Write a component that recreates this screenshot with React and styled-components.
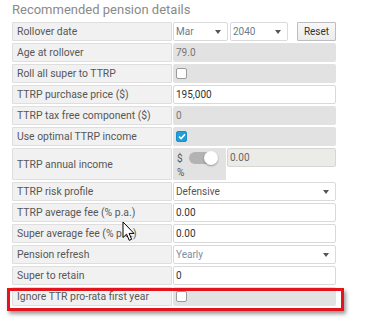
import React from "react";
import styled, { createGlobalStyle } from "styled-components";

const Global = createGlobalStyle`
  html, body { margin: 0; padding: 0; background: #fff; }
  body { font-family: Roboto, "Liberation Sans", Arial, sans-serif; }
`;

const Panel = styled.div`
  position: relative;
  width: 368px;
  height: 324px;
  box-sizing: border-box;
  padding: 2px 0 0 12px;
  overflow: hidden;
`;

const Title = styled.h2`
  margin: 0 0 4px;
  height: 16px;
  line-height: 16px;
  font-size: 13px;
  font-weight: 400;
  color: #8a8a8a;
`;

const Form = styled.div`
  display: flex;
  flex-direction: column;
  gap: 2px;
  width: 324px;
`;

const Row = styled.div`
  display: grid;
  grid-template-columns: 160px 1fr;
  column-gap: 1px;
  height: ${(p) => (p.$tall ? 32 : 19)}px;
`;

const Label = styled.div`
  display: flex;
  align-items: center;
  box-sizing: border-box;
  padding-left: 4px;
  background: #f1f1f1;
  border: 1px solid #dedede;
  border-radius: 1px;
  font-size: 10.4px;
  color: #575757;
  white-space: nowrap;
`;

const ReadOnly = styled.div`
  display: flex;
  align-items: center;
  box-sizing: border-box;
  padding-left: 3px;
  background: #e2e2e2;
  border-radius: 2px;
  font-size: 10px;
  color: #777;
`;

const TextInput = styled.input`
  box-sizing: border-box;
  width: 100%;
  height: 19px;
  margin: 0;
  padding: 0 2px;
  background: ${(p) => (p.disabled ? "#ebebe7" : "#fff")};
  border: 1px solid ${(p) => (p.disabled ? "#d6d6d2" : "#d9d9d9")};
  border-radius: 2px;
  font-family: inherit;
  font-size: 10px;
  color: ${(p) => (p.disabled ? "#666" : "#333")};
  outline: none;
`;

const SelectBox = styled.div`
  display: flex;
  align-items: center;
  justify-content: space-between;
  box-sizing: border-box;
  width: ${(p) => (p.$w ? `${p.$w}px` : "100%")};
  height: 19px;
  padding: 0 6px 0 2px;
  background: #fff;
  border: 1px solid #dadada;
  border-radius: 2px;
  font-size: 10px;
  color: ${(p) => p.$color || "#666"};
`;

const Caret = () => (
  <svg width="6" height="4" viewBox="0 0 6 4">
    <path d="M0 0H6L3 4Z" fill="#555" />
  </svg>
);

const Select = ({ value, w, color }) => (
  <SelectBox $w={w} $color={color}>
    <span>{value}</span>
    <Caret />
  </SelectBox>
);

const DateControls = styled.div`
  display: flex;
  align-items: center;
`;

const Gap = styled.span`
  width: ${(p) => p.$w}px;
`;

const Button = styled.button`
  box-sizing: border-box;
  width: 39px;
  height: 19px;
  margin: 0;
  padding: 0;
  background: linear-gradient(#f7f7f7, #ececec);
  border: 1px solid #bdbdbd;
  border-radius: 1px;
  font-family: inherit;
  font-size: 10px;
  color: #333;
`;

const CheckCell = styled(ReadOnly)`
  padding-left: 3px;
`;

const Check = styled.span`
  display: flex;
  align-items: center;
  justify-content: center;
  box-sizing: border-box;
  width: 11px;
  height: 11px;
  background: ${(p) => (p.$on ? "#1f9fd9" : "#fff")};
  border: 1px solid ${(p) => (p.$on ? "#1a8fc4" : "#9a9a9a")};
  border-radius: 2px;
`;

const Checkbox = ({ on }) => (
  <Check $on={on}>
    {on && (
      <svg width="8" height="7" viewBox="0 0 8 7">
        <path d="M1 3.6L3.1 5.6L7 1.2" fill="none" stroke="#fff" strokeWidth="1.6" />
      </svg>
    )}
  </Check>
);

const IncomeCell = styled.div`
  display: grid;
  grid-template-columns: 53px 1fr;
  column-gap: 1px;
  align-items: start;
`;

const ModeBox = styled.div`
  display: flex;
  flex-direction: column;
  box-sizing: border-box;
  height: 32px;
  padding: 3px 0 0 4px;
  background: #e2e2e2;
  font-size: 10px;
  color: #555;
`;

const ModeLine = styled.div`
  display: flex;
  align-items: center;
  gap: 6px;
  height: 14px;
`;

const Track = styled.span`
  display: flex;
  align-items: center;
  justify-content: flex-end;
  width: 28px;
  height: 12px;
  border-radius: 6px;
  background: #b3b3b3;
`;

const Knob = styled.span`
  width: 14px;
  height: 14px;
  margin-right: -1px;
  border-radius: 50%;
  background: #fff;
  box-shadow: 0 1px 2px rgba(0, 0, 0, 0.35);
`;

const Highlight = styled.div`
  position: relative;
`;

const Annotation = styled.div`
  position: absolute;
  left: -5px;
  top: 1px;
  right: -8px;
  bottom: -5px;
  border: 3px solid #e3141c;
  box-shadow: 2px 3px 4px rgba(0, 0, 0, 0.4);
  pointer-events: none;
`;

const Cursor = styled.svg`
  position: absolute;
  left: 122px;
  top: 221px;
`;

export default function App() {
  return (
    <>
      <Global />
      <Panel>
        <Title>Recommended pension details</Title>
        <Form>
          <Row>
            <Label>Rollover date</Label>
            <DateControls>
              <Select value="Mar" w={55} color="#6b7c8f" />
              <Gap $w={2} />
              <Select value="2040" w={58} color="#6b7c8f" />
              <Gap $w={9} />
              <Button>Reset</Button>
            </DateControls>
          </Row>
          <Row>
            <Label>Age at rollover</Label>
            <ReadOnly>79.0</ReadOnly>
          </Row>
          <Row>
            <Label>Roll all super to TTRP</Label>
            <CheckCell>
              <Checkbox />
            </CheckCell>
          </Row>
          <Row>
            <Label>TTRP purchase price ($)</Label>
            <TextInput readOnly value="195,000" />
          </Row>
          <Row>
            <Label>TTRP tax free component ($)</Label>
            <ReadOnly>0</ReadOnly>
          </Row>
          <Row>
            <Label>Use optimal TTRP income</Label>
            <CheckCell>
              <Checkbox on />
            </CheckCell>
          </Row>
          <Row $tall>
            <Label>TTRP annual income</Label>
            <IncomeCell>
              <ModeBox>
                <ModeLine>
                  <span>$</span>
                  <Track>
                    <Knob />
                  </Track>
                </ModeLine>
                <ModeLine>%</ModeLine>
              </ModeBox>
              <TextInput disabled value="0.00" readOnly />
            </IncomeCell>
          </Row>
          <Row>
            <Label>TTRP risk profile</Label>
            <Select value="Defensive" color="#555" />
          </Row>
          <Row>
            <Label>TTRP average fee (% p.a.)</Label>
            <TextInput readOnly value="0.00" />
          </Row>
          <Row>
            <Label>Super average fee (% p.a.)</Label>
            <TextInput readOnly value="0.00" />
          </Row>
          <Row>
            <Label>Pension refresh</Label>
            <Select value="Yearly" color="#7d8ea3" />
          </Row>
          <Row>
            <Label>Super to retain</Label>
            <TextInput readOnly value="0" />
          </Row>
          <Highlight>
            <Row>
              <Label>Ignore TTR pro-rata first year</Label>
              <CheckCell>
                <Checkbox />
              </CheckCell>
            </Row>
            <Annotation />
          </Highlight>
        </Form>
        <Cursor width="14" height="21" viewBox="0 0 14 21">
          <path
            d="M1 1V16.5L4.6 13.2L7.2 19.3L9.6 18.3L7.1 12.4H12Z"
            fill="#fff"
            stroke="#000"
            strokeWidth="1"
            strokeLinejoin="round"
          />
        </Cursor>
      </Panel>
    </>
  );
}
